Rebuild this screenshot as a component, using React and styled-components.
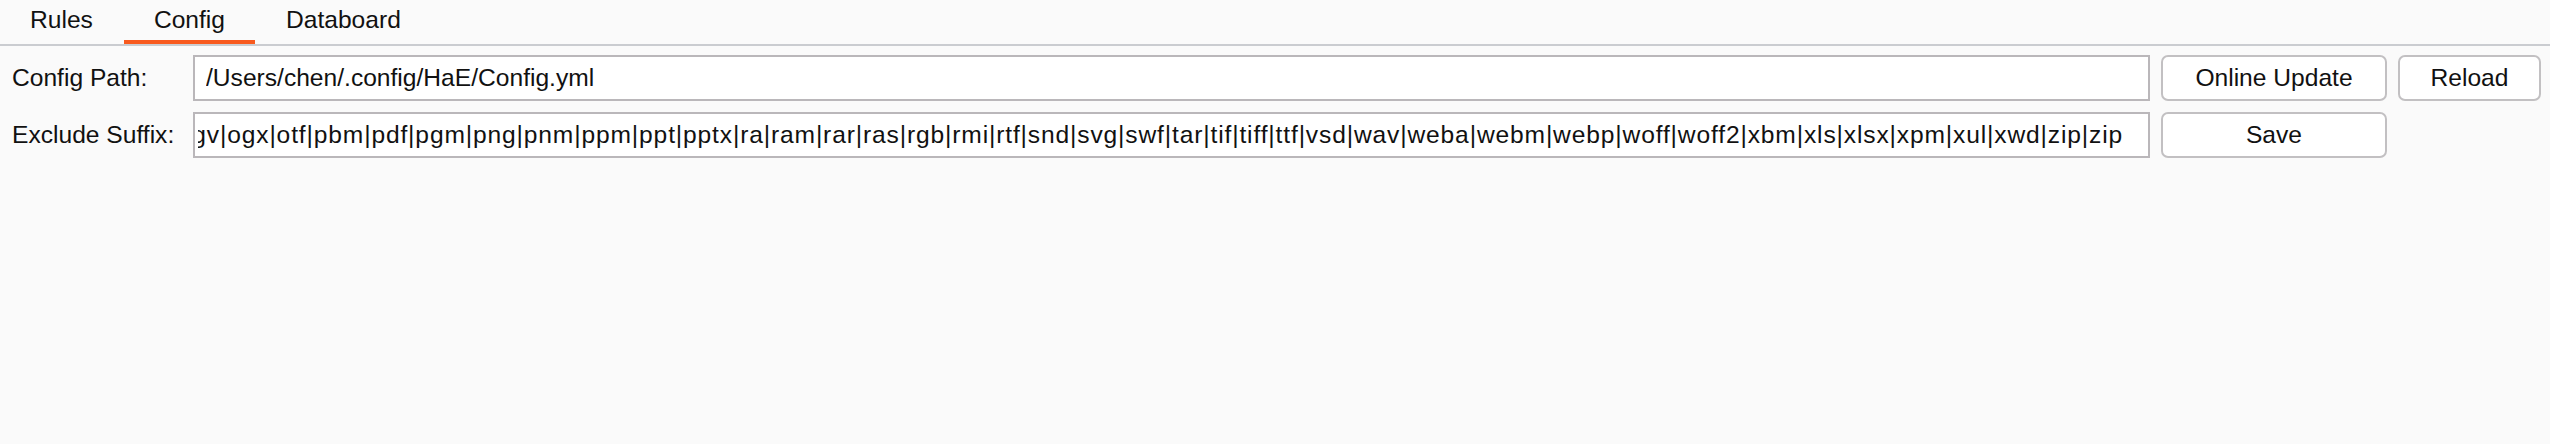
import React from 'react';
import styled, { createGlobalStyle } from 'styled-components';

const GlobalStyle = createGlobalStyle`
  html, body {
    margin: 0;
    padding: 0;
    background: #fafafa;
  }
  body {
    font-family: "Liberation Sans", Arial, Helvetica, sans-serif;
    color: #111;
  }
`;

const Page = styled.div`
  width: 2550px;
  height: 444px;
  background: #fafafa;
  font-size: 24.6px;
`;

const TabBar = styled.div`
  display: flex;
  height: 44px;
  border-bottom: 2px solid #caccd0;
`;

const Tab = styled.div`
  display: flex;
  align-items: center;
  height: 40px;
  padding: 0 30px;
  margin-right: 1px;
  border-bottom: 4px solid ${(p) => (p.active ? '#f85a1e' : 'transparent')};
  color: #111;
  cursor: default;
`;

const Form = styled.div`
  display: grid;
  grid-template-columns: 172px 1fr 226px 143px;
  grid-auto-rows: 46px;
  column-gap: 11px;
  row-gap: 11px;
  padding: 9px 9px 0 10px;
`;

const Label = styled.div`
  display: flex;
  align-items: center;
  padding-left: 2px;
  white-space: nowrap;
`;

const Field = styled.div`
  display: flex;
  align-items: center;
  box-sizing: border-box;
  height: 46px;
  min-width: 0;
  background: #fff;
  border: 2px solid #bab7ba;
  padding: ${(p) => (p.scrolled ? '0 25px 0 3px' : '0 11px')};
  overflow: hidden;
`;

const FieldText = styled.div`
  display: flex;
  justify-content: ${(p) => (p.scrolled ? 'flex-end' : 'flex-start')};
  flex: 1;
  min-width: 0;
  overflow: hidden;
  white-space: nowrap;
  letter-spacing: ${(p) => (p.scrolled ? '0.85px' : 'normal')};
`;

const Button = styled.button`
  box-sizing: border-box;
  height: 46px;
  background: #fff;
  border: 2px solid #c2c0c2;
  border-radius: 7px;
  font-family: inherit;
  font-size: inherit;
  color: #111;
  padding: 0;
`;

// the field is scrolled to its end; only the tail of the list is in view
const suffixTail =
  'ogv|ogx|otf|pbm|pdf|pgm|png|pnm|ppm|ppt|pptx|ra|ram|rar|ras|rgb|rmi|rtf|snd|svg|swf|tar|tif|tiff|ttf|vsd|wav|weba|webm|webp|woff|woff2|xbm|xls|xlsx|xpm|xul|xwd|zip|zip';

const App = () => {
  return (
    <Page>
      <GlobalStyle />
      <TabBar>
        <Tab>Rules</Tab>
        <Tab active>Config</Tab>
        <Tab>Databoard</Tab>
      </TabBar>
      <Form>
        <Label>Config Path:</Label>
        <Field>
          <FieldText>/Users/chen/.config/HaE/Config.yml</FieldText>
        </Field>
        <Button>Online Update</Button>
        <Button>Reload</Button>

        <Label>Exclude Suffix:</Label>
        <Field scrolled>
          <FieldText scrolled>
            <span>{suffixTail}</span>
          </FieldText>
        </Field>
        <Button>Save</Button>
      </Form>
    </Page>
  );
};

export default App;
